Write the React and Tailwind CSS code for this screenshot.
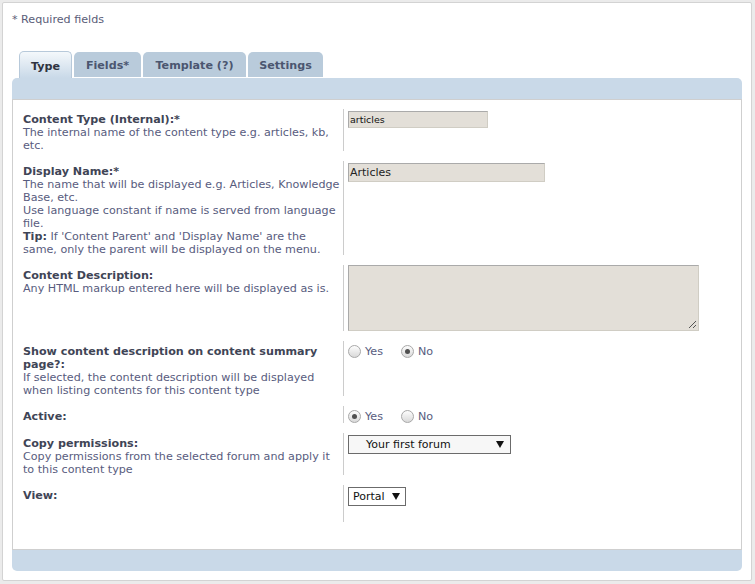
import React from "react";

function Radio({ checked }) {
  return (
    <span className="relative inline-flex h-[13px] w-[13px] shrink-0 items-center justify-center rounded-full border border-[#a8a8a8] bg-linear-to-b from-[#fdfdfd] to-[#d9d9d9]">
      {checked && <span className="h-[5px] w-[5px] rounded-full bg-[#4f4f4f]" />}
    </span>
  );
}

function Arrow() {
  return (
    <svg width="8" height="7" viewBox="0 0 8 7" className="shrink-0">
      <path d="M0 0 L8 0 L4 7 Z" fill="#111" />
    </svg>
  );
}

function Row({ title, children, input, className = "" }) {
  return (
    <div className={"flex " + className}>
      <div className="w-[320px] shrink-0 pt-[4px] -mb-[1px]">
        <div className="font-bold text-[#3f4556]">{title}</div>
        {children && <div className="text-[#585c7e]">{children}</div>}
      </div>
      <div className="flex-1 border-l border-[#cccccc] pl-[4px]">{input}</div>
    </div>
  );
}

function RadioPair({ yes }) {
  return (
    <div className="flex items-center pt-[4px] text-[#585c7e]">
      <Radio checked={yes} />
      <span className="ml-[4px]">Yes</span>
      <span className="ml-[18px]" />
      <Radio checked={!yes} />
      <span className="ml-[4px]">No</span>
    </div>
  );
}

export default function App() {
  return (
    <div className="h-[584px] w-[755px] bg-[#ebebeb] pt-[2px] pl-[2px] pr-[3px] pb-[3px] font-['DejaVu_Sans',sans-serif] text-[11.15px] leading-[13px]">
      <div className="h-full rounded-[2px] border border-[#d3d3d3] bg-white px-[9px] pt-[10px]">
        <div className="text-[#5a5d78]">* Required fields</div>

        <div className="mt-[25px] ml-[7px] flex items-end gap-[2px] font-bold">
          <div className="flex h-[27px] w-[53px] items-center justify-center rounded-t-[5px] border border-b-0 border-[#b7c9da] bg-linear-to-b from-[#f4f8fb] to-[#c9d9e8] pt-[2px] text-[#2f3340]">
            Type
          </div>
          <div className="mb-[1px] flex h-[25px] w-[67px] items-center justify-center rounded-t-[5px] bg-[#b9cbdb] pt-[1px] text-[#4b5670]">
            Fields*
          </div>
          <div className="mb-[1px] flex h-[25px] w-[103px] items-center justify-center rounded-t-[5px] bg-[#b9cbdb] pt-[1px] text-[#4b5670]">
            Template (?)
          </div>
          <div className="mb-[1px] flex h-[25px] w-[75px] items-center justify-center rounded-t-[5px] bg-[#b9cbdb] pt-[1px] text-[#4b5670]">
            Settings
          </div>
        </div>

        <div className="w-[730px] rounded-[5px] bg-[#c9d9e8] pt-[21px] pb-[21px]">
          <div className="border border-[#cfcfcf] bg-white pt-[9px] pb-[27px] pl-[10px]">
            <div className="flex flex-col gap-[10px]">
              <Row
                title="Content Type (Internal):*"
                input={
                  <div className="mt-[2px] flex h-[17px] w-[140px] items-center border border-t-[#aaaaaa] border-l-[#aaaaaa] border-b-[#d0cdc4] border-r-[#d0cdc4] bg-[#e3dfd8] pl-[1px] text-[9.5px] text-[#111]">
                    articles
                  </div>
                }
              >
                The internal name of the content type e.g. articles, kb, etc.
              </Row>

              <Row
                title="Display Name:*"
                input={
                  <div className="mt-[2px] flex h-[19px] w-[197px] items-center border border-t-[#aaaaaa] border-l-[#aaaaaa] border-b-[#d0cdc4] border-r-[#d0cdc4] bg-[#e3dfd8] pl-[1px] text-[11px] text-[#222]">
                    Articles
                  </div>
                }
              >
                <div>The name that will be displayed e.g. Articles, Knowledge Base, etc.</div>
                <div>Use language constant if name is served from language file.</div>
                <div>
                  <span className="font-bold text-[#3f4556]">Tip:</span> If 'Content Parent' and 'Display Name' are the
                  <br />
                  same, only the parent will be displayed on the menu.
                </div>
              </Row>

              <Row
                title="Content Description:"
                input={
                  <div className="relative h-[66px] w-[351px] border border-t-[#aaaaaa] border-l-[#aaaaaa] border-b-[#d0cdc4] border-r-[#d0cdc4] bg-[#e3dfd8]">
                    <svg width="9" height="9" viewBox="0 0 9 9" className="absolute right-[1px] bottom-[1px]">
                      <path d="M8 1 L1 8 M8 5 L5 8" stroke="#555" strokeWidth="1" />
                    </svg>
                  </div>
                }
              >
                Any HTML markup entered here will be displayed as is.
              </Row>

              <Row title="Show content description on content summary page?:" input={<RadioPair yes={false} />}>
                If selected, the content description will be displayed when listing contents for this content type
              </Row>

              <Row title="Active:" input={<RadioPair yes={true} />} />

              <Row
                title="Copy permissions:"
                input={
                  <div className="mt-[2px] flex h-[19px] w-[163px] items-center justify-between border border-[#6b6b6b] bg-[#f7f7f7] pl-[17px] pr-[6px] text-[11px] text-[#111]">
                    <span>Your first forum</span>
                    <Arrow />
                  </div>
                }
              >
                Copy permissions from the selected forum and apply it to this content type
              </Row>

              <Row
                title="View:"
                className="min-h-[37px]"
                input={
                  <div className="mt-[2px] flex h-[19px] w-[58px] items-center justify-between border border-[#6b6b6b] bg-white pl-[4px] pr-[5px] text-[11px] text-[#111]">
                    <span>Portal</span>
                    <Arrow />
                  </div>
                }
              />
            </div>
          </div>
        </div>
      </div>
    </div>
  );
}
